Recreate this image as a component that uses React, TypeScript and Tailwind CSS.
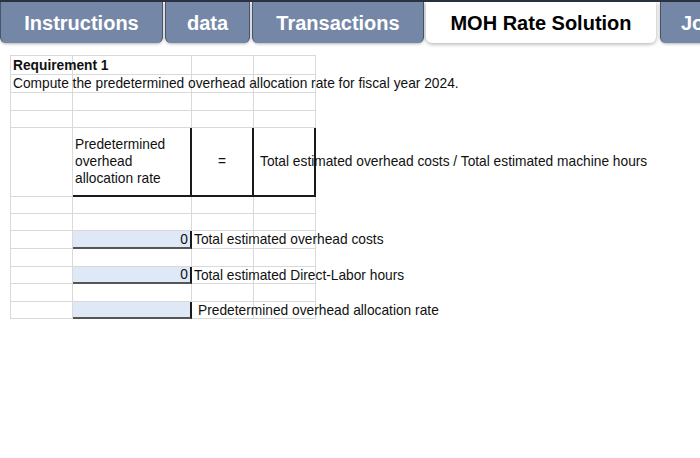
import React from "react";

const W = ["w-[62px]", "w-[119px]", "w-[62px]", "w-[62px]"];

function Tab({ label, active, w, pl }: { label: string; active?: boolean; w: string; pl?: string }) {
  return (
    <div
      className={
        "h-[41px] shrink-0 flex items-center rounded-b-[6px] text-[20px] font-bold " +
        w +
        " " +
        (pl ?? "justify-center") +
        (active
          ? " bg-white text-black shadow-[0_1px_4px_rgba(0,0,0,0.35)] z-10"
          : " bg-[#7587a7] text-white border-x border-[#4a5468] shadow-[0_1px_3px_rgba(0,0,0,0.3)]")
      }
    >
      {label}
    </div>
  );
}

type Cell = {
  text?: React.ReactNode;
  cls?: string;
};

function Row({ h, cells }: { h: string; cells: Cell[] }) {
  return (
    <div className={"flex " + h}>
      {cells.map((c, i) => (
        <div
          key={i}
          className={
            "box-border shrink-0 relative flex items-center whitespace-nowrap " +
            W[i] +
            " " +
            (c.cls ?? "border-r border-b border-[#d9d9d9]")
          }
        >
          {c.text}
        </div>
      ))}
    </div>
  );
}

const e: Cell = {};

export default function App() {
  return (
    <div
      className="w-[700px] h-[458px] bg-white overflow-hidden text-[#111]"
      style={{ fontFamily: '"Liberation Sans", Arial, sans-serif' }}
    >
      <div className="h-[2px] bg-[#2c3444]" />
      <div className="flex items-start">
        <Tab label="Instructions" w="w-[163px]" />
        <div className="w-[2px] shrink-0" />
        <Tab label="data" w="w-[85px]" />
        <div className="w-[2px] shrink-0" />
        <Tab label="Transactions" w="w-[172px]" />
        <div className="w-[2px] shrink-0" />
        <Tab label="MOH Rate Solution" active w="w-[230px]" />
        <div className="w-[4px] shrink-0" />
        <Tab label="Jo" w="w-[60px]" pl="pl-[20px]" />
      </div>

      <div className="mt-[12px] ml-[10px] text-[13.75px] leading-[17px]">
        <div className="border-t border-l border-[#d9d9d9] w-fit">
          <Row
            h="h-[19px]"
            cells={[
              { text: <span className="absolute left-[2px] font-bold z-10">Requirement 1</span> },
              e,
              e,
              e,
            ]}
          />
          <Row
            h="h-[18px]"
            cells={[
              {
                text: (
                  <span className="absolute left-[2px] z-10">
                    Compute the predetermined overhead allocation rate for fiscal year 2024.
                  </span>
                ),
              },
              e,
              e,
              e,
            ]}
          />
          <Row h="h-[18px]" cells={[e, e, e, e]} />
          <Row h="h-[17px]" cells={[e, e, e, e]} />
          <Row
            h="h-[69px]"
            cells={[
              e,
              {
                text: (
                  <span className="pl-[2px] whitespace-normal leading-[17px]">
                    Predetermined
                    <br />
                    overhead
                    <br />
                    allocation rate
                  </span>
                ),
                cls: "border-r-2 border-b-2 border-r-[#1a1a1a] border-b-[#1a1a1a]",
              },
              {
                text: <span className="w-full text-center">=</span>,
                cls: "border-r-2 border-b-2 border-[#1a1a1a]",
              },
              {
                text: (
                  <span className="absolute left-[6px] z-10">
                    Total estimated overhead costs / Total estimated machine hours
                  </span>
                ),
                cls: "border-r-2 border-b-2 border-[#1a1a1a]",
              },
            ]}
          />
          <Row h="h-[17px]" cells={[e, e, e, e]} />
          <Row h="h-[17px]" cells={[e, e, e, e]} />
          <Row
            h="h-[18px]"
            cells={[
              e,
              {
                text: <span className="w-full text-right pr-[2px]">0</span>,
                cls: "bg-[#dee8f6] border-r-2 border-b-2 border-r-[#1a1a1a] border-b-[#555]",
              },
              { text: <span className="absolute left-[2px] z-10">Total estimated overhead costs</span> },
              e,
            ]}
          />
          <Row h="h-[18px]" cells={[e, e, e, e]} />
          <Row
            h="h-[17px]"
            cells={[
              e,
              {
                text: <span className="w-full text-right pr-[2px]">0</span>,
                cls: "bg-[#dee8f6] border-r-2 border-b-2 border-r-[#1a1a1a] border-b-[#555]",
              },
              { text: <span className="absolute left-[2px] z-10">Total estimated Direct-Labor hours</span> },
              e,
            ]}
          />
          <Row h="h-[18px]" cells={[e, e, e, e]} />
          <Row
            h="h-[17px]"
            cells={[
              e,
              {
                cls: "bg-[#dee8f6] border-r-2 border-b-2 border-r-[#1a1a1a] border-b-[#555]",
              },
              { text: <span className="absolute left-[6px] z-10">Predetermined overhead allocation rate</span> },
              e,
            ]}
          />
        </div>
      </div>
    </div>
  );
}
